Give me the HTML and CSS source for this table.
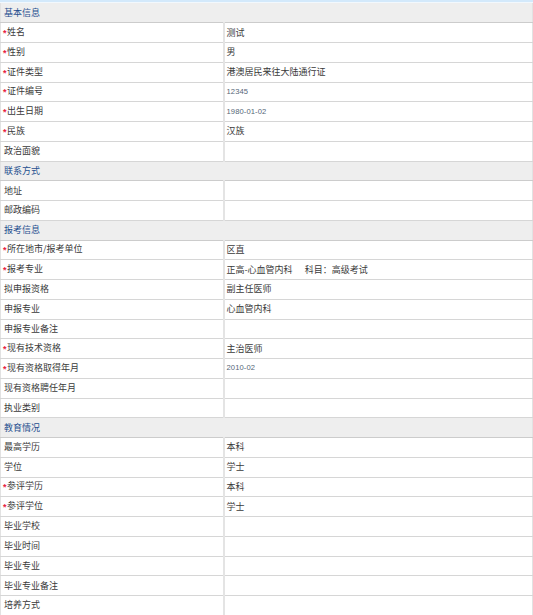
FILE: index.html
```html
<!DOCTYPE html>
<html lang="zh-CN">
<head>
<meta charset="utf-8">
<title>信息</title>
<link rel="stylesheet" href="styles.css">
</head>
<body>
<div class="topline"></div>
<table class="info">
  <colgroup><col class="c-label"><col class="c-value"></colgroup>
  <tbody>
    <tr class="sec"><td colspan="2">基本信息</td></tr>
    <tr><td class="lbl"><span class="req">*</span>姓名</td><td class="val">测试</td></tr>
    <tr><td class="lbl"><span class="req">*</span>性别</td><td class="val">男</td></tr>
    <tr><td class="lbl"><span class="req">*</span>证件类型</td><td class="val">港澳居民来往大陆通行证</td></tr>
    <tr><td class="lbl"><span class="req">*</span>证件编号</td><td class="val num">12345</td></tr>
    <tr><td class="lbl"><span class="req">*</span>出生日期</td><td class="val num">1980-01-02</td></tr>
    <tr><td class="lbl"><span class="req">*</span>民族</td><td class="val">汉族</td></tr>
    <tr><td class="lbl">政治面貌</td><td class="val"></td></tr>
    <tr class="sec"><td colspan="2">联系方式</td></tr>
    <tr><td class="lbl">地址</td><td class="val"></td></tr>
    <tr><td class="lbl">邮政编码</td><td class="val"></td></tr>
    <tr class="sec"><td colspan="2">报考信息</td></tr>
    <tr><td class="lbl"><span class="req">*</span>所在地市/报考单位</td><td class="val">区直</td></tr>
    <tr><td class="lbl"><span class="req">*</span>报考专业</td><td class="val">正高-心血管内科<span class="gap"></span>科目：高级考试</td></tr>
    <tr><td class="lbl">拟申报资格</td><td class="val">副主任医师</td></tr>
    <tr><td class="lbl">申报专业</td><td class="val">心血管内科</td></tr>
    <tr><td class="lbl">申报专业备注</td><td class="val"></td></tr>
    <tr><td class="lbl"><span class="req">*</span>现有技术资格</td><td class="val">主治医师</td></tr>
    <tr><td class="lbl"><span class="req">*</span>现有资格取得年月</td><td class="val num">2010-02</td></tr>
    <tr><td class="lbl">现有资格聘任年月</td><td class="val"></td></tr>
    <tr><td class="lbl">执业类别</td><td class="val"></td></tr>
    <tr class="sec"><td colspan="2">教育情况</td></tr>
    <tr><td class="lbl">最高学历</td><td class="val">本科</td></tr>
    <tr><td class="lbl">学位</td><td class="val">学士</td></tr>
    <tr><td class="lbl"><span class="req">*</span>参评学历</td><td class="val">本科</td></tr>
    <tr><td class="lbl"><span class="req">*</span>参评学位</td><td class="val">学士</td></tr>
    <tr><td class="lbl">毕业学校</td><td class="val"></td></tr>
    <tr><td class="lbl">毕业时间</td><td class="val"></td></tr>
    <tr><td class="lbl">毕业专业</td><td class="val"></td></tr>
    <tr><td class="lbl">毕业专业备注</td><td class="val"></td></tr>
    <tr><td class="lbl">培养方式</td><td class="val"></td></tr>
  </tbody>
</table>
</body>
</html>
```

FILE: styles.css
```css
html, body {
  margin: 0;
  padding: 0;
  background: #ffffff;
}
body {
  font-family: "Noto Sans CJK SC", "Noto Sans", sans-serif;
  font-size: 9px;
  color: #3a3a3a;
}
.topline {
  height: 2px;
  background: #d3e9fb;
  border-bottom: 1px solid #f2f8fd;
}
.info {
  width: 533px;
  border-collapse: collapse;
  table-layout: fixed;
}
.c-label { width: 223px; }
.info td {
  height: 19.75px;
  padding: 0 0 0 3px;
  border-bottom: 1px solid #d6d6d6;
  border-left: 1px solid #e2e2e2;
  white-space: nowrap;
  line-height: 12px;
  vertical-align: middle;
  box-sizing: border-box;
}
.info tr td:last-child { border-right: 1px solid #e2e2e2; }
.info .val {
  border-left: 2px solid #e4e4e4;
  padding-left: 2px;
}
.sec td {
  background: #eeeeee;
  color: #1f4f8e;
  border-bottom: 1px solid #cccccc;
}
.lbl .req {
  color: #e8203c;
  font-family: "Liberation Sans", Arial, sans-serif;
  font-weight: bold;
  font-size: 9px;
  display: inline-block;
  width: 4px;
  margin-left: -1px;
  vertical-align: -1px;
}
.num {
  font-family: "Liberation Sans", Arial, sans-serif;
  font-size: 7.6px;
  color: #556677;
  letter-spacing: 0.1px;
}
.gap {
  display: inline-block;
  width: 12px;
}
```
